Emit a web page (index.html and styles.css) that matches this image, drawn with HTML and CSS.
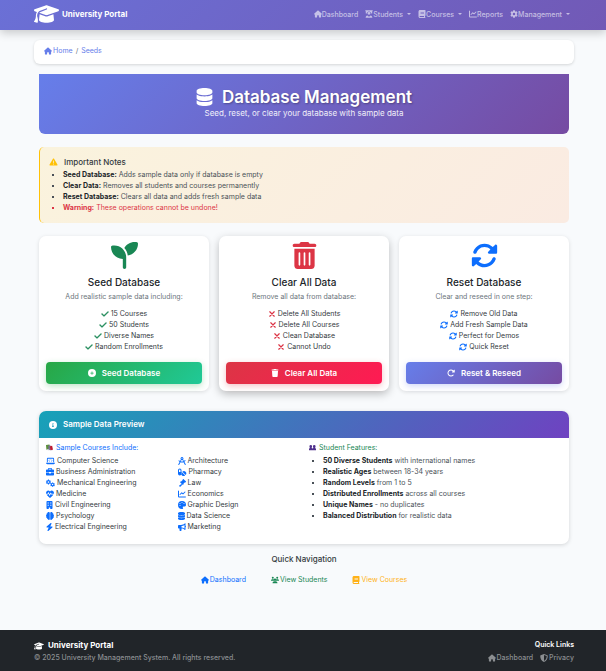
FILE: index.html
```html
<!DOCTYPE html>
<html lang="en">
<head>
<meta charset="utf-8">
<meta name="viewport" content="width=device-width, initial-scale=1">
<title>Database Management - University Portal</title>
<link rel="stylesheet" href="styles.css">
</head>
<body>
<svg class="sprite" aria-hidden="true">
  <symbol id="cap" viewBox="0 0 640 512"><path d="M320 32c-8.100 0-16.100 1.400-23.700 4.100L15.800 137.400C6.300 140.900 0 149.900 0 160s6.300 19.100 15.800 22.600l57.900 20.900C57.300 229.300 48 259.800 48 291.900v28.100c0 28.400-10.800 57.700-22.300 80.800c-6.500 13-13.900 25.800-22.500 37.600C0 442.700-.9 448.300 .9 453.400s6 8.900 11.200 10.200l64 16c4.200 1.100 8.700 .3 12.400-2s6.300-6.100 7.100-10.400c8.600-42.800 4.300-81.200-2.100-108.700C90.300 344.300 86 329.800 80 316.500V291.900c0-30.200 10.200-58.700 27.900-81.500c12.900-15.500 29.600-28 49.200-35.700l157-61.700c8.200-3.200 17.500 .8 20.700 9s-.8 17.500-9 20.700l-157 61.700c-12.400 4.900-23.300 12.400-32.200 21.600l159.600 57.600c7.600 2.700 15.600 4.100 23.700 4.100s16.100-1.400 23.700-4.100L624.200 182.600c9.500-3.400 15.800-12.500 15.800-22.600s-6.300-19.100-15.800-22.600L343.700 36.100C336.100 33.400 328.100 32 320 32zM128 408c0 35.300 86 72 192 72s192-36.700 192-72L496.700 262.600 354.500 314c-11.100 4-22.800 6-34.500 6s-23.500-2-34.500-6L143.300 262.600 128 408z"/></symbol>
  <symbol id="home" viewBox="0 0 576 512"><path d="M575.800 255.500c0 18-15 32.100-32 32.100h-32l.7 160.200c0 2.700-.2 5.400-.5 8.100V472c0 22.100-17.900 40-40 40H392c-22.100 0-40-17.900-40-40V384c0-17.700-14.300-32-32-32H256c-17.700 0-32 14.300-32 32v88c0 22.100-17.900 40-40 40H104c-22.100 0-40-17.900-40-40V287.600H32c-18 0-32-14-32-32.100c0-9 3-17 10-24L266.400 8c7-7 15-8 22-8s15 2 21 7L564.800 231.500c8 7 12 15 11 24z"/></symbol>
  <symbol id="teacher" viewBox="0 0 512 512"><path d="M20 20h472v60h-30v150h-70c15-80-50-140-136-140S105 150 120 230H50V80H20zM256 120a95 95 0 1 1 0 190 95 95 0 0 1 0-190zM150 345l106 90 106-90c65 20 110 75 110 147H40c0-72 45-127 110-147z"/></symbol>
  <symbol id="book" viewBox="0 0 448 512"><path d="M96 0C43 0 0 43 0 96V416c0 53 43 96 96 96H416c17.700 0 32-14.300 32-32s-14.300-32-32-32V384c17.700 0 32-14.300 32-32V32c0-17.700-14.300-32-32-32H96zm0 384H352v64H96c-17.700 0-32-14.300-32-32s14.300-32 32-32zm32-240c0-8.800 7.200-16 16-16H336c8.800 0 16 7.200 16 16s-7.200 16-16 16H144c-8.800 0-16-7.200-16-16zm16 48H336c8.800 0 16 7.200 16 16s-7.200 16-16 16H144c-8.800 0-16-7.200-16-16s7.200-16 16-16z"/></symbol>
  <symbol id="chart" viewBox="0 0 512 512"><path d="M64 64c0-17.700-14.300-32-32-32S0 46.300 0 64V400c0 44.200 35.800 80 80 80H480c17.700 0 32-14.300 32-32s-14.300-32-32-32H80c-8.800 0-16-7.200-16-16V64zm406.600 86.600c12.500-12.500 12.500-32.800 0-45.300s-32.800-12.500-45.300 0L320 210.700l-57.400-57.400c-12.500-12.500-32.800-12.500-45.300 0l-112 112c-12.500 12.500-12.500 32.800 0 45.300s32.800 12.500 45.300 0L240 221.300l57.400 57.400c12.500 12.500 32.800 12.500 45.300 0l128-128z"/></symbol>
  <symbol id="gear" viewBox="0 0 512 512"><path fill-rule="evenodd" d="M205 15h102l15 66 44 25 64-20 52 88-49 46v72l49 46-52 88-64-20-44 25-15 66H205l-15-66-44-25-64 20-52-88 49-46v-72l-49-46 52-88 64 20 44-25zM256 176a80 80 0 1 0 0 160 80 80 0 0 0 0-160z"/></symbol>
  <symbol id="database" viewBox="0 0 448 512"><path d="M448 80v48c0 44.200-100.300 80-224 80S0 172.200 0 128V80C0 35.800 100.300 0 224 0S448 35.800 448 80zM393.200 214.700c20.800-7.400 39.900-16.900 54.800-28.600V288c0 44.200-100.300 80-224 80S0 332.200 0 288V186.100c14.900 11.800 34 21.200 54.800 28.600C99.700 230.700 159.500 240 224 240s124.300-9.300 169.200-25.300zM0 346.100c14.900 11.800 34 21.200 54.800 28.600C99.700 390.700 159.500 400 224 400s124.300-9.300 169.200-25.300c20.800-7.400 39.900-16.900 54.800-28.600V432c0 44.200-100.300 80-224 80S0 476.200 0 432V346.100z"/></symbol>
  <symbol id="warning" viewBox="0 0 512 512"><path d="M256 32c14.200 0 27.300 7.500 34.500 19.800l216 368c7.300 12.400 7.300 27.700 .2 40.100S486.300 480 472 480H40c-14.300 0-27.600-7.700-34.700-20.100s-7-27.800 .2-40.100l216-368C228.700 39.500 241.800 32 256 32zm0 128c-13.300 0-24 10.700-24 24V296c0 13.300 10.700 24 24 24s24-10.700 24-24V184c0-13.300-10.700-24-24-24zm32 224a32 32 0 1 0 -64 0 32 32 0 1 0 64 0z"/></symbol>
  <symbol id="seedling" viewBox="0 0 512 512"><path d="M512 32c0 113.600-84.600 207.500-194.200 222c-7.100-53.400-30.600-101.600-65.300-139.300C290.800 46.300 364 0 448 0h32c17.700 0 32 14.300 32 32zM0 96C0 78.300 14.300 64 32 64H64c123.700 0 224 100.300 224 224v192c0 17.700-14.300 32-32 32s-32-14.300-32-32V320C100.300 320 0 219.700 0 96z"/></symbol>
  <symbol id="trash-can" viewBox="0 0 448 512"><path d="M135.200 17.700L128 32H32C14.300 32 0 46.300 0 64S14.300 96 32 96H416c17.700 0 32-14.300 32-32s-14.300-32-32-32H320l-7.200-14.300C307.400 6.800 296.300 0 284.200 0H163.800c-12.100 0-23.200 6.800-28.600 17.700zM416 128H32V448c0 35.300 28.700 64 64 64H352c35.300 0 64-28.700 64-64V128zM144 208V432c0 8.800-7.200 16-16 16s-16-7.200-16-16V208c0-8.800 7.200-16 16-16s16 7.200 16 16zm96 0V432c0 8.800-7.200 16-16 16s-16-7.200-16-16V208c0-8.800 7.200-16 16-16s16 7.200 16 16zm96 0V432c0 8.800-7.200 16-16 16s-16-7.200-16-16V208c0-8.800 7.200-16 16-16s16 7.200 16 16z"/></symbol>
  <symbol id="trash" viewBox="0 0 448 512"><path d="M135.200 17.700L128 32H32C14.300 32 0 46.300 0 64S14.300 96 32 96H416c17.700 0 32-14.300 32-32s-14.300-32-32-32H320l-7.200-14.300C307.400 6.800 296.300 0 284.200 0H163.800c-12.100 0-23.200 6.800-28.600 17.700zM416 128H32L53.200 467c1.600 25.300 22.600 45 47.900 45H346.900c25.300 0 46.300-19.700 47.900-45L416 128z"/></symbol>
  <symbol id="sync" viewBox="0 0 512 512"><path d="M142.900 142.900c62.200-62.200 162.700-62.500 225.300-1L327 183c-6.900 6.900-8.900 17.200-5.200 26.200s12.500 14.800 22.200 14.800H472c13.300 0 24-10.700 24-24V72c0-9.700-5.800-18.500-14.800-22.200s-19.300-1.700-26.200 5.200L413.400 96.600c-87.600-86.500-228.700-86.200-315.800 1C73.200 122 55.600 150.700 44.800 181.400c-5.900 16.700 2.900 34.900 19.500 40.800s34.900-2.900 40.800-19.500c7.700-21.800 20.200-42.300 37.800-59.800zM16 312V440c0 9.700 5.800 18.500 14.800 22.200s19.300 1.700 26.200-5.200l41.600-41.600c87.600 86.500 228.700 86.200 315.800-1c24.400-24.400 42.100-53.100 52.900-83.700c5.900-16.700-2.900-34.900-19.500-40.800s-34.900 2.900-40.800 19.500c-7.700 21.800-20.200 42.300-37.800 59.800c-62.200 62.200-162.700 62.500-225.300 1L185 329c6.900-6.900 8.900-17.200 5.200-26.200s-12.500-14.800-22.200-14.800H40c-13.300 0-24 10.700-24 24z"/></symbol>
  <symbol id="redo" viewBox="0 0 512 512"><path d="M463.500 224H472c13.300 0 24-10.700 24-24V72c0-9.700-5.800-18.500-14.800-22.200s-19.300-1.700-26.200 5.200L413.400 96.600c-87.600-86.500-228.700-86.200-315.800 1c-87.500 87.500-87.500 229.300 0 316.800s229.300 87.500 316.800 0c12.500-12.500 12.500-32.800 0-45.300s-32.800-12.500-45.300 0c-62.500 62.500-163.800 62.500-226.300 0s-62.500-163.800 0-226.300c62.200-62.200 162.700-62.500 225.300-1L327 183c-6.900 6.900-8.900 17.200-5.200 26.200s12.500 14.800 22.200 14.800H463.500z"/></symbol>
  <symbol id="check" viewBox="0 0 448 512"><path stroke="currentColor" stroke-width="24" d="M438.600 105.400c12.500 12.500 12.500 32.800 0 45.300l-256 256c-12.500 12.500-32.800 12.500-45.300 0l-128-128c-12.500-12.500-12.500-32.800 0-45.300s32.800-12.500 45.300 0L160 338.700 393.400 105.400c12.500-12.500 32.800-12.500 45.300 0z"/></symbol>
  <symbol id="times" viewBox="0 0 384 512"><path d="M50 114l284 284M334 114L50 398" fill="none" stroke="currentColor" stroke-width="76" stroke-linecap="round"/></symbol>
  <symbol id="plus-circle" viewBox="0 0 512 512"><path fill-rule="evenodd" d="M256 0a256 256 0 1 0 0 512 256 256 0 0 0 0-512zM232 152h48v80h80v48h-80v80h-48v-80h-80v-48h80z"/></symbol>
  <symbol id="info-circle" viewBox="0 0 512 512"><path fill-rule="evenodd" d="M256 0a256 256 0 1 0 0 512 256 256 0 0 0 0-512zM256 128a32 32 0 1 1 0 64 32 32 0 0 1 0-64zM200 224h80v112h28v48H196v-48h36v-64h-32z"/></symbol>
  <symbol id="books" viewBox="0 0 16 16"><path fill="#5c913b" d="M0 2l8-1 1 11-8 1z"/><path fill="#7a6a92" d="M5 4l5-1 1 10-5 1z"/><path fill="#be1931" d="M9 5l5-1 2 9-6 1z"/><path fill="#c9d1d8" d="M2 12l6-1v1l-6 2zM9 14l6-1v1l-6 1z"/></symbol>
  <symbol id="busts" viewBox="0 0 16 16"><path fill="#50318d" d="M1 5a3 3 0 0 1 6 0c0 2-1 3-1 4l2 1 2-1c0-1-1-2-1-4a3 3 0 0 1 6 0c0 2-1 3-1 4l2 2v3H0v-3l2-2c0-1-1-2-1-4z"/></symbol>
  <symbol id="laptop" viewBox="0 0 640 512"><path fill-rule="evenodd" d="M64 96c0-35 29-64 64-64h384c35 0 64 29 64 64v256h-64V96H128v256H64zM0 384h640c0 53-43 96-96 96H96c-53 0-96-43-96-96z"/><path d="M278 150l-74 74 74 74M362 150l74 74-74 74" fill="none" stroke="currentColor" stroke-width="42"/></symbol>
  <symbol id="briefcase" viewBox="0 0 512 512"><path fill-rule="evenodd" d="M128 96V48c0-26 22-48 48-48h160c26 0 48 22 48 48v48h64c35 0 64 29 64 64v96H0v-96c0-35 29-64 64-64zM176 48v48h160V48zM0 288h192v32c0 18 14 32 32 32h64c18 0 32-14 32-32v-32h192v128c0 35-29 64-64 64H64c-35 0-64-29-64-64z"/></symbol>
  <symbol id="gears" viewBox="0 0 640 512"><path fill-rule="evenodd" d="M140 15h70l12 45 45 25 45-13 36 60-33 34v42l33 34-36 60-45-13-45 25-12 45h-70l-12-45-45-25-45 13-36-60 33-34v-42L2 132l36-60 45 13 45-25zM175 125a60 60 0 1 0 0 120 60 60 0 0 0 0-120zM435 220h66l11 40 40 20 40-10 34 56-30 30v40l30 30-34 56-40-10-40 20-11 30h-66l-11-30-40-20-40 10-34-56 30-30v-40l-30-30 34-56 40 10 40-20zM468 318a52 52 0 1 0 0 104 52 52 0 0 0 0-104z"/></symbol>
  <symbol id="heart" viewBox="0 0 512 512"><path d="M256 96C310 20 405 16 465 75c43 43 55 105 37 165H350l-28-58c-9-16-34-16-41 0l-49 109-55-130c-8-18-34-18-41 1l-31 78H10C-7 180 4 116 47 75 107 16 202 20 256 96zM35 288h92l28-68 56 132c8 18 34 18 42 1l50-109 21 44h153c-8 15-19 30-32 43L283 490c-15 13-39 13-54 0L67 331c-13-13-24-28-32-43z"/></symbol>
  <symbol id="building" viewBox="0 0 384 512"><path fill-rule="evenodd" d="M48 0h288c26 0 48 22 48 48v416c0 26-22 48-48 48h-96v-96h-96v96H48c-26 0-48-22-48-48V48C0 22 22 0 48 0zM72 88v72h72V88zm168 0v72h72V88zM72 232v72h72v-72zm168 0v72h72v-72z"/></symbol>
  <symbol id="brain" viewBox="0 0 512 512"><path d="M184 0c31 0 56 25 56 56v400c0 31-25 56-56 56-29 0-53-22-56-50-35 5-66-25-60-65-45-15-70-70-42-112-38-32-32-92 10-115-15-42 10-85 52-92C83 38 126 0 184 0zM328 0c-31 0-56 25-56 56v400c0 31 25 56 56 56 29 0 53-22 56-50 35 5 66-25 60-65 45-15 70-70 42-112 38-32 32-92-10-115 15-42-10-85-52-92C429 38 386 0 328 0z"/></symbol>
  <symbol id="bolt" viewBox="0 0 448 512"><path d="M349.400 44.600c5.900-13.700 1.500-29.700-10.600-38.500s-28.600-8-39.900 1.800l-256 224c-10 8.800-13.600 22.900-8.900 35.300S50.700 288 64 288H175.500L98.600 467.400c-5.900 13.700-1.500 29.700 10.600 38.500s28.600 8 39.900-1.800l256-224c10-8.800 13.600-22.900 8.900-35.300s-16.600-20.700-30-20.700H272.500L349.400 44.600z"/></symbol>
  <symbol id="compass" viewBox="0 0 512 512"><path fill-rule="evenodd" d="M256 0a96 96 0 0 1 70 160l52 90c25-15 48-35 66-58l48 38c-24 31-53 57-86 76l96 166-15 40-50-22-88-152c-60 19-126 19-186 0L76 490l-51 22-15-40 91-158c-32-18-59-42-82-68l49-41c18 21 40 39 64 53l54-98A96 96 0 0 1 256 0zM256 64a32 32 0 1 0 0 64 32 32 0 0 0 0-64zM226 188l-44 78-10 17c55 15 113 15 168 0l-54-95c-20 6-40 6-60 0z"/></symbol>
  <symbol id="pills" viewBox="0 0 576 512"><path fill-rule="evenodd" d="M0 144a112 112 0 0 1 224 0v224a112 112 0 0 1-224 0zM64 144v112h96V144a48 48 0 0 0-96 0zM277 242l207 207a144 144 0 0 0-207-207zM254 267a144 144 0 0 0 205 205z"/></symbol>
  <symbol id="gavel" viewBox="0 0 512 512"><path d="M318 9c12-12 33-12 45 0l140 140c12 12 12 33 0 45l-24 24-30-7-100 100 7 30-24 24c-12 12-33 12-45 0L147 225c-12-12-12-33 0-45l24-24 30 7L301 63l-7-30zM220 320l52 52-120 120c-25 25-105-50-72-78z"/></symbol>
  <symbol id="palette" viewBox="0 0 512 512"><path fill-rule="evenodd" d="M512 256c0 75-65 96-120 96h-48c-45 0-58 50-30 75 34 34 10 85-58 85a256 256 0 1 1 256-256zM128 256a32 32 0 1 0 0 64 32 32 0 0 0 0-64zM128 128a32 32 0 1 0 0 64 32 32 0 0 0 0-64zM256 64a32 32 0 1 0 0 64 32 32 0 0 0 0-64zM384 128a32 32 0 1 0 0 64 32 32 0 0 0 0-64z"/></symbol>
  <symbol id="bullhorn" viewBox="0 0 512 512"><path fill-rule="evenodd" d="M480 32v148c40 15 40 77 0 92v148c0 25-30 40-50 22-55-55-125-80-206-84v90c0 35-20 64-56 64h-28c-24 0-44-20-44-44V352h-32c-35 0-64-29-64-64v-96c0-35 29-64 64-64h128c92 0 168-23 238-92 20-20 50-20 50-4zM224 190v103c73 4 138 23 192 60V130c-54 37-119 56-192 60z"/></symbol>
  <symbol id="users" viewBox="0 0 640 512"><path d="M144 0a80 80 0 1 1 0 160 80 80 0 0 1 0-160zM496 0a80 80 0 1 1 0 160 80 80 0 0 1 0-160zM320 128a96 96 0 1 1 0 192 96 96 0 0 1 0-192zM107 192h86c10 0 20 2 30 6-7 42 7 85 40 116l-12 6H0v-21c0-59 48-107 107-107zM447 192h86c59 0 107 48 107 107v21H389l-12-6c33-31 47-74 40-116 10-4 20-6 30-6zM261 352h118c74 0 133 60 133 133v27H128v-27c0-73 59-133 133-133z"/></symbol>
  <symbol id="shield" viewBox="0 0 512 512"><path fill-rule="evenodd" d="M256 0l212 83c17 7 28 23 28 42 0 155-60 305-240 387C76 430 16 280 16 125c0-19 11-35 28-42zM256 66v378c120-57 172-170 176-309z"/></symbol>
</svg>

<nav class="navbar">
  <a class="brand" href="#"><svg class="icon brand-icon"><use href="#cap"/></svg>University Portal</a>
  <div class="nav-links">
    <a href="#"><svg class="icon"><use href="#home"/></svg>Dashboard</a>
    <a class="menu" href="#"><svg class="icon"><use href="#teacher"/></svg>Students</a>
    <a class="menu" href="#"><svg class="icon"><use href="#book"/></svg>Courses</a>
    <a href="#"><svg class="icon"><use href="#chart"/></svg>Reports</a>
    <a class="menu" href="#"><svg class="icon"><use href="#gear"/></svg>Management</a>
  </div>
</nav>

<main>
  <nav class="breadcrumb" aria-label="Breadcrumb">
    <a href="#"><svg class="icon"><use href="#home"/></svg>Home</a><span class="slash">/</span><a href="#">Seeds</a>
  </nav>
  <div class="content">
    <header class="hero">
      <h1><svg class="icon hero-icon"><use href="#database"/></svg>Database Management</h1>
      <p>Seed, reset, or clear your database with sample data</p>
    </header>

    <section class="notes">
      <h2><svg class="icon note-icon"><use href="#warning"/></svg>Important Notes</h2>
      <ul class="bullets">
        <li><strong>Seed Database:</strong> Adds sample data only if database is empty</li>
        <li><strong>Clear Data:</strong> Removes all students and courses permanently</li>
        <li><strong>Reset Database:</strong> Clears all data and adds fresh sample data</li>
        <li class="danger"><strong>Warning:</strong> These operations cannot be undone!</li>
      </ul>
    </section>

    <div class="cards">
      <section class="card green">
        <svg class="icon card-icon"><use href="#seedling"/></svg>
        <h2>Seed Database</h2>
        <p>Add realistic sample data including:</p>
        <ul>
          <li><svg class="icon"><use href="#check"/></svg>15 Courses</li>
          <li><svg class="icon"><use href="#check"/></svg>50 Students</li>
          <li><svg class="icon"><use href="#check"/></svg>Diverse Names</li>
          <li><svg class="icon"><use href="#check"/></svg>Random Enrollments</li>
        </ul>
        <button type="button"><svg class="icon"><use href="#plus-circle"/></svg>Seed Database</button>
      </section>
      <section class="card red">
        <svg class="icon card-icon"><use href="#trash-can"/></svg>
        <h2>Clear All Data</h2>
        <p>Remove all data from database:</p>
        <ul>
          <li><svg class="icon"><use href="#times"/></svg>Delete All Students</li>
          <li><svg class="icon"><use href="#times"/></svg>Delete All Courses</li>
          <li><svg class="icon"><use href="#times"/></svg>Clean Database</li>
          <li><svg class="icon"><use href="#times"/></svg>Cannot Undo</li>
        </ul>
        <button type="button"><svg class="icon"><use href="#trash"/></svg>Clear All Data</button>
      </section>
      <section class="card blue">
        <svg class="icon card-icon"><use href="#sync"/></svg>
        <h2>Reset Database</h2>
        <p>Clear and reseed in one step:</p>
        <ul>
          <li><svg class="icon"><use href="#sync"/></svg>Remove Old Data</li>
          <li><svg class="icon"><use href="#sync"/></svg>Add Fresh Sample Data</li>
          <li><svg class="icon"><use href="#sync"/></svg>Perfect for Demos</li>
          <li><svg class="icon"><use href="#sync"/></svg>Quick Reset</li>
        </ul>
        <button type="button"><svg class="icon"><use href="#redo"/></svg>Reset &amp; Reseed</button>
      </section>
    </div>

    <section class="preview">
      <h2><svg class="icon"><use href="#info-circle"/></svg>Sample Data Preview</h2>
      <div class="preview-body">
        <div>
          <h3 class="courses-title"><svg class="icon"><use href="#books"/></svg>Sample Courses Include:</h3>
          <div class="courses">
            <ul>
              <li><svg class="icon wide"><use href="#laptop"/></svg>Computer Science</li>
              <li><svg class="icon"><use href="#briefcase"/></svg>Business Administration</li>
              <li><svg class="icon wide"><use href="#gears"/></svg>Mechanical Engineering</li>
              <li><svg class="icon"><use href="#heart"/></svg>Medicine</li>
              <li><svg class="icon slim"><use href="#building"/></svg>Civil Engineering</li>
              <li><svg class="icon"><use href="#brain"/></svg>Psychology</li>
              <li><svg class="icon slim"><use href="#bolt"/></svg>Electrical Engineering</li>
            </ul>
            <ul>
              <li><svg class="icon"><use href="#compass"/></svg>Architecture</li>
              <li><svg class="icon wide"><use href="#pills"/></svg>Pharmacy</li>
              <li><svg class="icon"><use href="#gavel"/></svg>Law</li>
              <li><svg class="icon"><use href="#chart"/></svg>Economics</li>
              <li><svg class="icon"><use href="#palette"/></svg>Graphic Design</li>
              <li><svg class="icon slim"><use href="#database"/></svg>Data Science</li>
              <li><svg class="icon"><use href="#bullhorn"/></svg>Marketing</li>
            </ul>
          </div>
        </div>
        <div>
          <h3 class="features-title"><svg class="icon"><use href="#busts"/></svg>Student Features:</h3>
          <ul class="bullets">
            <li><strong>50 Diverse Students</strong> with international names</li>
            <li><strong>Realistic Ages</strong> between 18-34 years</li>
            <li><strong>Random Levels</strong> from 1 to 5</li>
            <li><strong>Distributed Enrollments</strong> across all courses</li>
            <li><strong>Unique Names</strong> - no duplicates</li>
            <li><strong>Balanced Distribution</strong> for realistic data</li>
          </ul>
        </div>
      </div>
    </section>

    <section class="quick">
      <h2>Quick Navigation</h2>
      <div class="quick-links">
        <a class="to-dashboard" href="#"><svg class="icon"><use href="#home"/></svg>Dashboard</a>
        <a class="to-students" href="#"><svg class="icon"><use href="#users"/></svg>View Students</a>
        <a class="to-courses" href="#"><svg class="icon"><use href="#book"/></svg>View Courses</a>
      </div>
    </section>
  </div>
</main>

<footer>
  <div>
    <h2><svg class="icon"><use href="#cap"/></svg>University Portal</h2>
    <p>© 2025 University Management System. All rights reserved.</p>
  </div>
  <div class="footer-right">
    <h3>Quick Links</h3>
    <div class="footer-links">
      <a href="#"><svg class="icon"><use href="#home"/></svg>Dashboard</a>
      <a href="#"><svg class="icon"><use href="#shield"/></svg>Privacy</a>
    </div>
  </div>
</footer>
</body>
</html>
```
FILE: styles.css
```css
* { box-sizing: border-box; }

body {
  margin: 0;
  min-height: 100vh;
  display: flex;
  flex-direction: column;
  background: #f8fafc;
  color: #212529;
  font-family: Inter, "Liberation Sans", sans-serif;
  font-size: 7px;
  line-height: 11px;
}

h1, h2, h3, p, ul { margin: 0; padding: 0; }
ul { list-style: none; }
a { color: inherit; text-decoration: none; }
a, h1, h2, h3 { display: flex; align-items: center; }

.sprite { position: absolute; width: 0; height: 0; }
.icon { width: 8px; height: 8px; flex: none; fill: currentColor; }

.navbar {
  display: flex;
  justify-content: space-between;
  align-items: center;
  height: 30px;
  padding: 0 36px 2px 34px;
  background: linear-gradient(135deg, #667eea -60%, #764ba2 160%);
  box-shadow: 0 3px 10px rgba(0, 0, 0, .2);
}
.brand { gap: 3px; color: #fff; font-size: 8px; font-weight: 700; }
.brand-icon { width: 25px; height: 20px; }
.nav-links { display: flex; gap: 7px; color: rgba(255, 255, 255, .6); font-weight: 500; }
.nav-links a { gap: 0; }
.menu::after {
  content: "";
  margin-left: 4px;
  border: 2px solid transparent;
  border-top-color: currentColor;
  border-bottom: 0;
}

main { flex: 1; padding: 10px 32px 0 34px; }
.breadcrumb {
  display: flex;
  height: 24px;
  padding: 5px 10px;
  background: #fff;
  border-radius: 6px;
  box-shadow: 0 1px 3px rgba(0, 0, 0, .15);
  color: #667eea;
}
.breadcrumb a { gap: 1px; height: 11px; }
.slash { padding: 0 3px; color: #6c757d; }

.content { padding: 10px 5px 0; }

.hero {
  height: 60px;
  padding-top: 14px;
  border-radius: 0 0 6px 6px;
  background: linear-gradient(135deg, #667eea, #764ba2);
  color: #fff;
  text-align: center;
}
.hero h1 {
  justify-content: center;
  gap: 9px;
  font-size: 17px;
  line-height: 18px;
  font-weight: 600;
  text-shadow: 1px 1px 2px rgba(0, 0, 0, .3);
}
.hero-icon { width: 17px; height: 18px; }
.hero p { font-size: 8px; line-height: 14px; opacity: .9; }

.notes {
  margin-top: 13px;
  height: 76px;
  padding: 9px;
  border-left: 1px solid #ffc107;
  border-radius: 5px;
  background: linear-gradient(135deg, #faf3dd, #faebe2);
}
.notes h2 { gap: 6px; font-size: 8px; line-height: 12px; font-weight: 500; color: #343a40; }
.note-icon { width: 9px; color: #ffc107; }
.notes ul { margin-top: 1px; }

.bullets { padding-left: 14px; list-style: square; color: #495057; }
.bullets strong { color: #212529; font-weight: 700; }
.bullets .danger, .danger strong { color: #dc3545; }

.cards { display: grid; grid-template-columns: repeat(3, 1fr); gap: 10px; margin-top: 13px; }
.card {
  height: 155px;
  padding: 6px 7px 7px;
  display: flex;
  flex-direction: column;
  align-items: center;
  border-radius: 7px;
  background: #fff;
  box-shadow: 0 1px 4px rgba(0, 0, 0, .12);
  color: #495057;
  text-align: center;
}
.card-icon { width: 27px; height: 27px; }
.card h2 { margin-top: 7px; font-size: 10px; line-height: 13px; font-weight: 500; color: #212529; }
.card p { margin-top: 2px; color: #6c757d; }
.card ul { display: grid; grid-auto-rows: 1fr; height: 43px; margin-top: 6px; color: #343a40; }
.card li { display: flex; align-items: center; justify-content: center; gap: 2px; }
.card button {
  display: flex;
  align-items: center;
  justify-content: center;
  gap: 6px;
  width: 100%;
  height: 22px;
  margin-top: auto;
  padding: 0;
  border: 0;
  border-radius: 4px;
  color: #fff;
  font: 600 8px/12px Inter, "Liberation Sans", sans-serif;
}
.green > .icon, .green li .icon { color: #198754; }
.red > .icon, .red li .icon { color: #dc3545; }
.blue > .icon, .blue li .icon { color: #0d6efd; }
.red { box-shadow: 0 3px 8px rgba(0, 0, 0, .25); }
.green button { background: linear-gradient(135deg, #28a745, #20c997); box-shadow: 0 2px 6px rgba(40, 167, 69, .3); }
.red button { background: linear-gradient(135deg, #dc3545, #ff1a53); box-shadow: 0 2px 6px rgba(220, 53, 69, .3); }
.blue button { background: linear-gradient(135deg, #667eea, #764ba2); box-shadow: 0 2px 6px rgba(102, 126, 234, .3); }

.preview {
  margin-top: 20px;
  height: 133px;
  border-radius: 7px;
  overflow: hidden;
  background: #fff;
  box-shadow: 0 1px 4px rgba(0, 0, 0, .15);
}
.preview h2 {
  gap: 6px;
  height: 27px;
  padding: 0 10px;
  background: linear-gradient(135deg, #17a2b8, #6f42c1);
  color: #fff;
  font-size: 8px;
  font-weight: 600;
}
.preview-body { display: grid; grid-template-columns: 1fr 1fr; gap: 10px; padding: 4px 7px; color: #343a40; }
.preview h3 { gap: 3px; margin-bottom: 2px; font-size: 7px; font-weight: 400; }
.preview h3 .icon { width: 7px; height: 7px; }
.courses-title { color: #0d6efd; }
.features-title { color: #198754; }
.courses { display: grid; grid-template-columns: 1fr 1fr; gap: 10px; }
.courses ul { display: grid; grid-auto-rows: 1fr; height: 75px; }
.courses li { display: flex; align-items: center; gap: 2px; white-space: nowrap; }
.courses .icon { color: #0d6efd; }
.courses .wide { width: 9px; }
.courses .slim { width: 7px; }

.quick { margin-top: 9px; }
.quick h2 { justify-content: center; font-size: 8px; line-height: 12px; font-weight: 500; color: #343a40; }
.quick-links { display: flex; justify-content: center; gap: 25px; margin-top: 9px; }
.quick-links a, .footer-links a { gap: 1px; }
.to-dashboard { color: #0d6efd; }
.to-students { color: #198754; }
.to-courses { color: #ffb219; }

footer {
  display: flex;
  justify-content: space-between;
  min-height: 41px;
  padding: 9px 32px 0 34px;
  background: #212529;
  color: #8b8e91;
  font-weight: 500;
}
footer h2 { gap: 4px; color: #fff; font-size: 8px; line-height: 13px; font-weight: 700; }
footer h2 .icon { width: 10px; }
footer h3 { justify-content: flex-end; color: #fff; font-size: 7px; font-weight: 600; }
.footer-links { display: flex; gap: 7px; margin-top: 2px; }
```
